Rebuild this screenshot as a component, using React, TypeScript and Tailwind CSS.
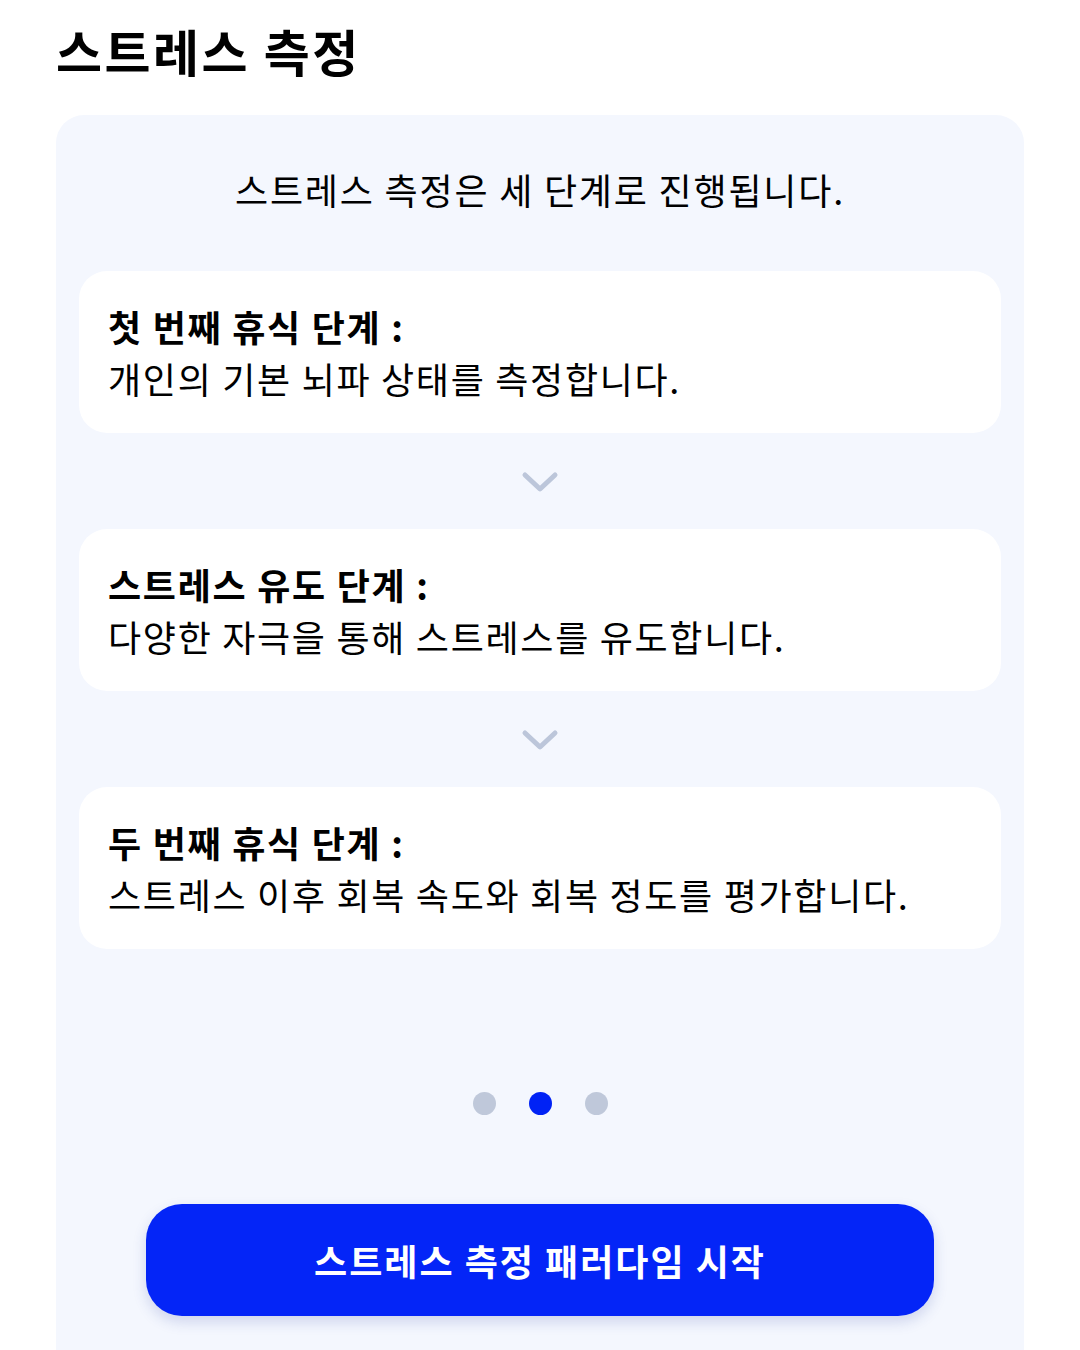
export default function App() {
  const steps = [
    { title: '첫 번째 휴식 단계 :', desc: '개인의 기본 뇌파 상태를 측정합니다.' },
    { title: '스트레스 유도 단계 :', desc: '다양한 자극을 통해 스트레스를 유도합니다.' },
    { title: '두 번째 휴식 단계 :', desc: '스트레스 이후 회복 속도와 회복 정도를 평가합니다.' },
  ]

  return (
    <div
      className="min-h-[1350px] bg-white text-black"
      style={{ fontFamily: '"Noto Sans CJK KR", "Noto Sans", sans-serif' }}
    >
      <div className="px-[56px] pt-[18px]">
        <h1 className="text-[50px] font-bold leading-[64px] tracking-[2.5px]">스트레스 측정</h1>

        <div className="mt-[33px] h-[1235px] rounded-t-[28px] bg-[#f4f7fe] px-[23px] pt-[48px]">
          <p className="text-center text-[36px] leading-[52px] tracking-[1.8px]">스트레스 측정은 세 단계로 진행됩니다.</p>

          <div className="mt-[56px] flex flex-col">
            {steps.map((s, i) => (
              <div key={i} className="flex flex-col">
                {i > 0 && (
                  <div className="flex h-[96px] items-center justify-center pt-[4px]">
                    <svg width="38" height="24" viewBox="0 0 38 24" fill="none">
                      <path d="M4 4 L19 18 L34 4" stroke="#bcc6da" strokeWidth="5" strokeLinecap="round" strokeLinejoin="round" />
                    </svg>
                  </div>
                )}
                <div className="flex h-[162px] flex-col justify-center rounded-[28px] bg-white px-[29px] tracking-[1.7px]">
                  <div className="text-[36px] font-bold leading-[52px]">{s.title}</div>
                  <div className="text-[36px] leading-[52px]">{s.desc}</div>
                </div>
              </div>
            ))}
          </div>

          <div className="mt-[143px] flex items-center justify-center gap-[33px]">
            <span className="h-[23px] w-[23px] rounded-full bg-[#bfc8da]" />
            <span className="h-[23px] w-[23px] rounded-full bg-[#0022f5]" />
            <span className="h-[23px] w-[23px] rounded-full bg-[#bfc8da]" />
          </div>

          <div className="mt-[89px] flex justify-center">
            <button className="flex h-[112px] w-[788px] items-center justify-center rounded-[36px] bg-[#0425f7] text-[36px] font-bold tracking-[2px] text-white shadow-[0_6px_14px_rgba(40,60,160,0.18)]">
              스트레스 측정 패러다임 시작
            </button>
          </div>
        </div>
      </div>
    </div>
  )
}
